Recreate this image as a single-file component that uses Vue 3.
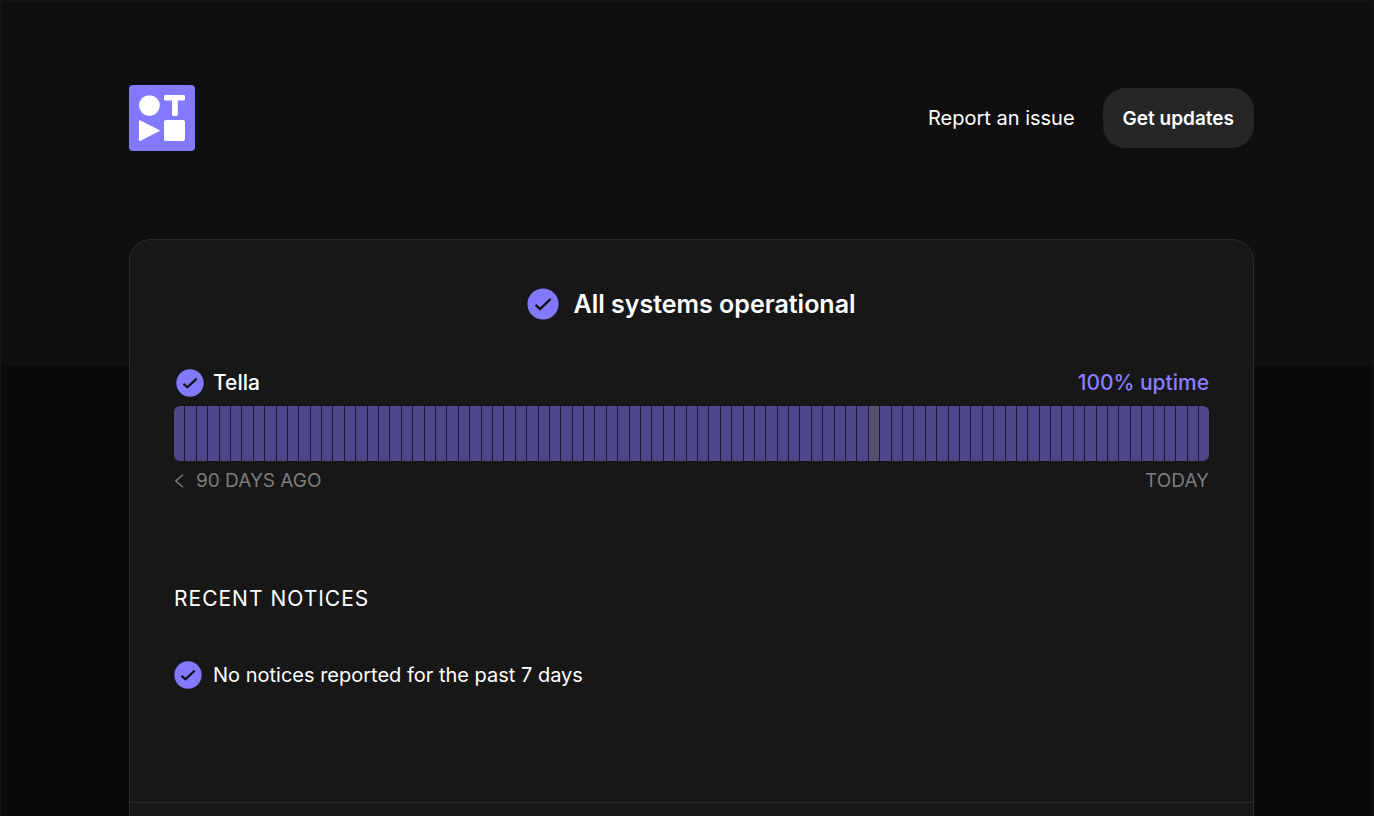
<script setup>
const days = Array.from({ length: 91 }, (_, i) => ({ id: i, empty: i === 61 }))
</script>

<template>
  <div class="page">
    <header class="top">
      <a href="#" class="logo" aria-label="Tella">
        <svg viewBox="0 0 66 66" aria-hidden="true">
          <rect width="66" height="66" rx="4" fill="#8379ff" />
          <g fill="#fff">
            <circle cx="20.4" cy="20.6" r="10.4" />
            <path d="M36.4 10H54.6Q56 10 56 11.4V14.2Q56 15.6 54.6 15.6H48.8V29.4Q48.8 31 47.2 31H44.6Q43 31 43 29.4V15.6H36.4Q35 15.6 35 14.2V11.4Q35 10 36.4 10Z" />
            <path d="M10 36.4Q10 34.8 11.5 35.5L30.2 44.9Q31.4 45.6 30.2 46.3L11.5 55.8Q10 56.4 10 55Z" />
            <rect x="35" y="35" width="21" height="21" rx="2" />
          </g>
        </svg>
      </a>
      <nav class="actions">
        <a href="#" class="report">Report an issue</a>
        <button type="button" class="updates">Get updates</button>
      </nav>
    </header>

    <main class="card">
      <section class="status">
        <h1 class="headline">
          <svg class="check large" viewBox="0 0 32 32" aria-hidden="true">
            <circle cx="16" cy="16" r="15.6" />
            <path d="M8.6 16.8L13 21L23.6 11" />
          </svg>
          <span>All systems operational</span>
        </h1>

        <div class="service">
          <h2 class="name">
            <svg class="check" viewBox="0 0 32 32" aria-hidden="true">
              <circle cx="16" cy="16" r="15.6" />
              <path d="M8.6 16.8L13 21L23.6 11" />
            </svg>
            <span>Tella</span>
          </h2>
          <span class="uptime">100% uptime</span>
        </div>
        <div class="bars" role="img" aria-label="Daily uptime for the past 90 days">
          <span v-for="day in days" :key="day.id" class="bar" :class="{ empty: day.empty }"></span>
        </div>
        <div class="range">
          <span class="from">
            <svg class="chevron" viewBox="0 0 10 14" aria-hidden="true"><path d="M9 0.8L1.8 7L9 13.2" /></svg>
            <span>90 DAYS AGO</span>
          </span>
          <span>TODAY</span>
        </div>

        <h2 class="notices-title">RECENT NOTICES</h2>
        <p class="notice">
          <svg class="check" viewBox="0 0 32 32" aria-hidden="true">
            <circle cx="16" cy="16" r="15.6" />
            <path d="M8.6 16.8L13 21L23.6 11" />
          </svg>
          <span>No notices reported for the past 7 days</span>
        </p>
      </section>
      <footer class="foot"></footer>
    </main>
  </div>
</template>

<style>
body {
  background: #0a0a0a;
  overflow: hidden;
}
</style>

<style scoped>
.page {
  box-sizing: border-box;
  height: 100vh;
  overflow: hidden;
  padding: 84px 119px 0 128px;
  border: 1px solid #161616;
  border-bottom: 0;
  background: linear-gradient(#0f0f0f 365px, #0a0a0a 365px);
  color: #fff;
  font-family: Inter, "Liberation Sans", sans-serif;
}
.top {
  display: flex;
  align-items: center;
  justify-content: space-between;
}
.logo,
.logo svg {
  display: block;
  width: 66px;
  height: 66px;
}
.actions {
  display: flex;
  align-items: center;
  gap: 28px;
}
.report {
  color: #fff;
  font-size: 20px;
  line-height: 28px;
  text-decoration: none;
}
.updates {
  height: 60px;
  padding: 0 20px;
  border: 0;
  border-radius: 22px;
  background: #262626;
  color: #fff;
  font-family: inherit;
  font-size: 19px;
  font-weight: 600;
}
.card {
  margin-top: 88px;
  border: 1px solid #2b2b2b;
  border-radius: 22px 22px 0 0;
  background: #171717;
}
.status {
  padding: 44px 44px 112px;
}
h1,
h2,
p {
  margin: 0;
}
.headline {
  display: flex;
  align-items: center;
  justify-content: center;
  gap: 14px;
  font-size: 25px;
  font-weight: 600;
  line-height: 40px;
}
.check {
  flex: none;
  width: 28px;
  height: 28px;
}
.check.large {
  width: 32px;
  height: 32px;
}
.check circle {
  fill: #8379ff;
}
.check path {
  fill: none;
  stroke: #111;
  stroke-width: 2.4;
}
.service,
.range {
  display: flex;
  align-items: center;
  justify-content: space-between;
}
.service {
  margin-top: 44px;
  line-height: 30px;
}
.name {
  display: flex;
  align-items: center;
  gap: 9px;
  padding-left: 2px;
  font-size: 21px;
  font-weight: 500;
}
.uptime {
  color: #8a7eff;
  font-size: 21px;
  font-weight: 500;
}
.bars {
  display: flex;
  gap: 1px;
  height: 55px;
  margin-top: 8px;
  overflow: hidden;
  border-radius: 6px;
  background: #1d1b2b;
}
.bar {
  flex: 1;
  background: #4e488a;
}
.bar.empty {
  background: #57506f;
}
.range {
  margin-top: 6px;
  color: #7c7c7c;
  font-size: 19px;
  line-height: 28px;
}
.from {
  display: flex;
  align-items: center;
  gap: 12px;
}
.chevron {
  width: 10px;
  height: 14px;
  fill: none;
  stroke: #7c7c7c;
  stroke-width: 1.5;
}
.notices-title {
  margin-top: 89px;
  font-size: 21px;
  font-weight: 400;
  line-height: 30px;
  letter-spacing: 1px;
}
.notice {
  display: flex;
  align-items: center;
  gap: 11px;
  margin-top: 46px;
  font-size: 20px;
  line-height: 30px;
}
.foot {
  height: 80px;
  border-top: 1px solid #2b2b2b;
}
</style>
